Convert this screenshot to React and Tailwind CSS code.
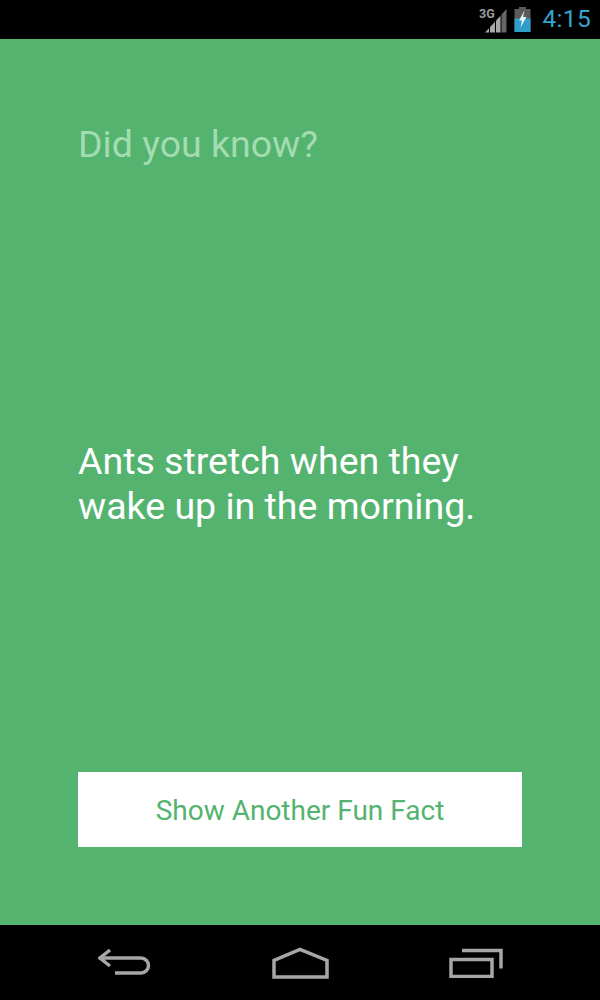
import React from 'react';

const SignalIcon = () => (
  <svg width="30" height="32" viewBox="0 0 30 32">
    <text x="1" y="13.500" fontSize="12.500" fontWeight="700" fill="#9a9a9a" fontFamily="Roboto, sans-serif">3G</text>
    <path d="M7 28.500l4-4.300v4.300z" fill="#a8a8a8" />
    <path d="M12 28.500v-5.400l5-5.400v10.800z" fill="#a8a8a8" />
    <path d="M18 28.500V16.600l4.500-4.900v16.800z" fill="#a8a8a8" />
    <path d="M23.500 28.500V10.500L28.500 5v23.500z" fill="#666" />
  </svg>
);

const BatteryIcon = () => (
  <svg width="17" height="25" viewBox="0 0 17 25">
    <path d="M5 0h7v2h4.500v23H.500V2H5z" fill="#5a5a5a" />
    <path d="M.500 11.500h16V25H.500z" fill="#2f9fc9" />
    <path d="M10.500 3.500L5 13.500h3l-1.500 7 6-10.500H9z" fill="#e8f6fb" />
  </svg>
);

const BackIcon = () => (
  <svg width="54" height="30" viewBox="0 0 54 30" fill="none" stroke="#a6a6a6" strokeWidth="3.500">
    <path d="M12 2L2 10l10 8" />
    <path d="M2 10h41a7.500 7.500 0 0 1 0 15H17" />
  </svg>
);

const HomeIcon = () => (
  <svg width="58" height="32" viewBox="0 0 58 32" fill="none" stroke="#a6a6a6" strokeWidth="3.500">
    <path d="M2 30V13.500L28 2.500l27 11V30z" />
  </svg>
);

const RecentsIcon = () => (
  <svg width="54" height="30" viewBox="0 0 54 30" fill="none" stroke="#a6a6a6" strokeWidth="3.500">
    <path d="M2 11.500h41v17H2z" />
    <path d="M13 2.500h39v18" />
  </svg>
);

export default function App() {
  return (
    <div className="w-[600px] h-[1000px] flex flex-col bg-[#54b36f] font-['Roboto',sans-serif]">
      {/* status bar */}
      <div className="h-[39px] bg-black flex items-center justify-end pr-[9px] gap-[6px]">
        <SignalIcon />
        <BatteryIcon />
        <span className="ml-[6px] text-[24.500px] leading-none tracking-[0.3px] text-[#33a5d0]">4:15</span>
      </div>

      <div className="flex-1 flex flex-col px-[78px] pt-[81px] pb-[78px]">
        <p className="text-[37.500px] leading-[48px] text-[#a3dcb0]">Did you know?</p>
        <p className="mt-[271px] text-[37.500px] leading-[45px] text-white">
          Ants stretch when they wake up in the morning.
        </p>
        <button className="mt-auto h-[75px] pt-[2px] bg-white text-[28px] text-[#54b36f]">
          Show Another Fun Fact
        </button>
      </div>

      {/* nav bar */}
      <div className="h-[75px] bg-black flex items-center justify-between pl-[98px] pr-[97px]">
        <BackIcon />
        <HomeIcon />
        <RecentsIcon />
      </div>
    </div>
  );
}
